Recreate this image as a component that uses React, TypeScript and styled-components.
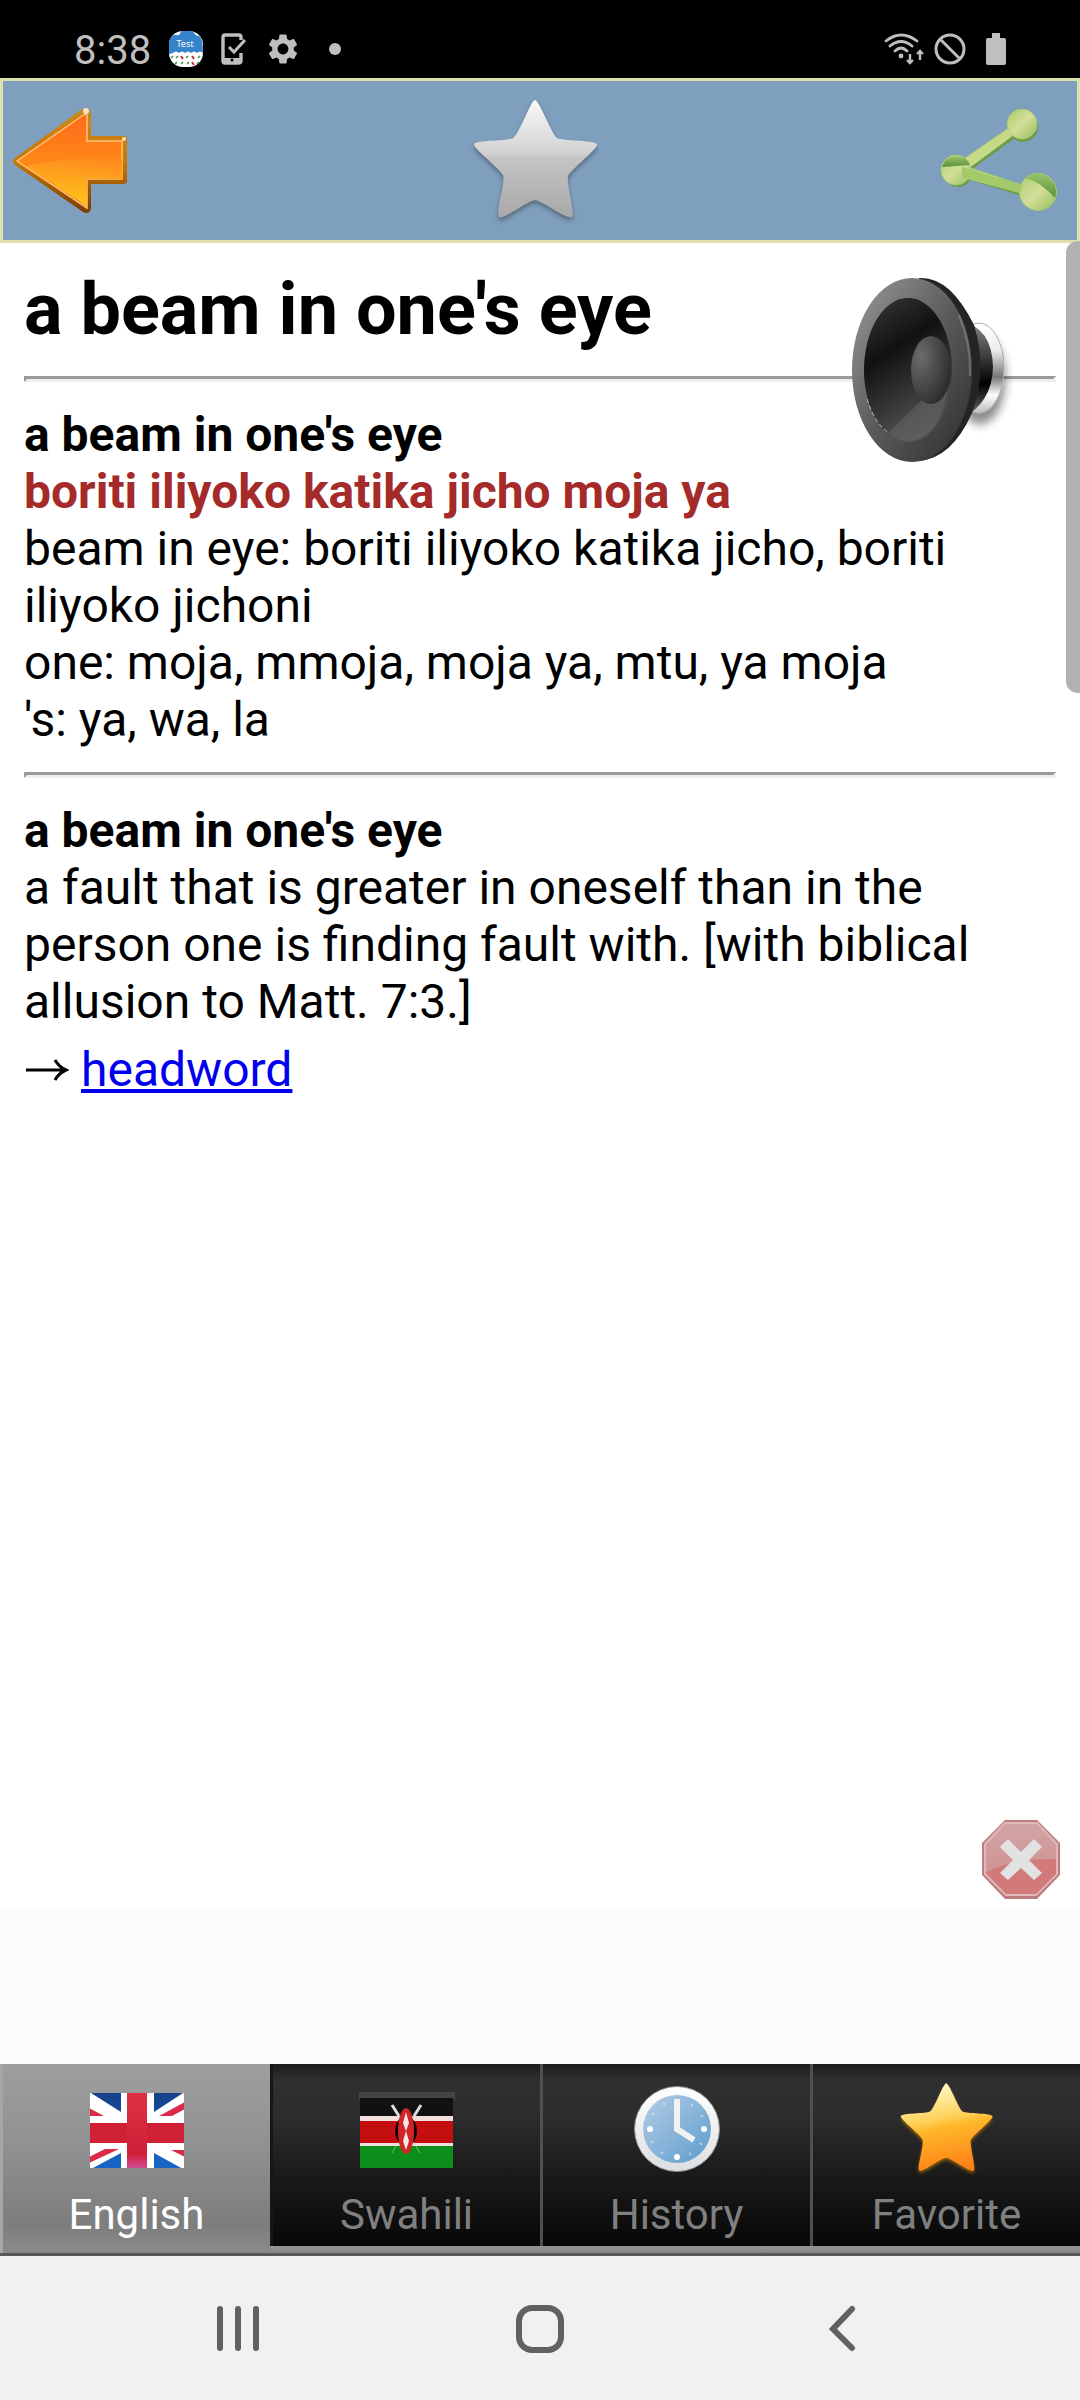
import React from "react";
import styled, { createGlobalStyle, css } from "styled-components";

const Global = createGlobalStyle`
  * { box-sizing: border-box; }
  body { margin: 0; background: #fff; font-family: Roboto, "Noto Sans", sans-serif; }
  button { border: 0; padding: 0; margin: 0; background: none; font: inherit; cursor: pointer; }
  svg { display: block; }
`;

const Screen = styled.div`
  display: flex;
  flex-direction: column;
  min-height: 100vh;
`;

const StatusBar = styled.header`
  display: flex;
  align-items: center;
  justify-content: space-between;
  height: 78px;
  padding: 20px 74px 0 74px;
  background: #000;
  color: #bfbfbf;
`;

const StatusGroup = styled.div<{ $gap: number }>`
  display: flex;
  align-items: center;
  gap: ${(p) => p.$gap}px;
`;

const Spaced = styled.span`
  padding-left: 10px;
`;

const Clock = styled.time`
  font-size: 40px;
  line-height: 48px;
  padding-top: 4px;
`;

const Toolbar = styled.nav`
  display: flex;
  align-items: center;
  justify-content: space-between;
  height: 165px;
  padding: 0 19px 0 9px;
  border: 3px solid #e0dfae;
  background: #7f9fbf;
`;

const Reader = styled.main`
  position: relative;
  flex: 1;
  padding: 24px;
`;

const Title = styled.h1`
  margin: 0;
  font-size: 72px;
  line-height: 85px;
  font-weight: 700;
`;

const Rule = styled.hr`
  margin: 24px 0;
  height: 6px;
  border: 3px solid;
  border-color: #9a9a9a #eee #eee #9a9a9a;
`;

const Entry = styled.section`
  font-size: 48px;
  line-height: 57px;
`;

const Line = styled.p<{ $tone?: "head" | "translation" }>`
  margin: 0;
  ${(p) => p.$tone && css`font-weight: 700;`}
  ${(p) => p.$tone === "translation" && css`color: brown;`}
`;

const Reference = styled.p`
  margin: 0;
  padding-top: 11px;
  display: flex;
  align-items: center;
  gap: 12px;
`;

const Link = styled.a`
  color: #00e;
  text-decoration: underline;
`;

const SpeakButton = styled.button`
  position: absolute;
  top: 30px;
  right: 66px;
`;

const ScrollThumb = styled.div`
  position: absolute;
  top: -2px;
  right: 0;
  width: 14px;
  height: 452px;
  border-radius: 12px 0 0 12px;
  background: #b1b1b1;
`;

const CloseButton = styled.button`
  position: absolute;
  right: 19px;
  bottom: 8px;
`;

const AdSpace = styled.aside`
  height: 156px;
  background: #fcfcfc;
`;

const Tabs = styled.nav`
  display: grid;
  grid-template-columns: repeat(4, 1fr);
  height: 192px;
  border-bottom: 3px solid #585858;
  background: linear-gradient(#969696 96%, #868686);
`;

const Tab = styled.button<{ $active?: boolean }>`
  display: flex;
  flex-direction: column;
  align-items: center;
  height: 182px;
  padding-top: 15px;
  font-size: 42px;
  line-height: 48px;
  color: #808080;
  border-left: 3px solid #505050;
  background: linear-gradient(#1c1c1c, #303030 9%, #2c2c2c 30%, #181818 65%, #080808);
  ${(p) =>
    p.$active &&
    css`
      height: 189px;
      color: #fff;
      border-left-color: #a6a6a6;
      background: linear-gradient(#9e9e9e, #929292 40%, #7d7d7d 85%, #8a8a8a);
      & + button { border-left-color: #161616; }
    `}
`;

const TabIcon = styled.span`
  display: flex;
  align-items: center;
  height: 104px;
  margin-bottom: 8px;
`;

const SystemNav = styled.footer`
  display: flex;
  align-items: center;
  justify-content: space-between;
  height: 144px;
  padding: 2px 205px 0;
  background: #f1f1f1;
`;

const STAR = "M62 3 C66 3 79 38 84 41 C90 44 120 43 124 47 C126 51 97 73 95 79 C93 86 102 116 99 120 C94 123 68 103 62 103 C56 103 30 123 26 120 C22 116 33 86 30 78 C27 72 0 51 1 47 C3 43 35 44 40 41 C46 38 58 3 62 3 Z";

function AppBadge() {
  return (
    <svg width="34" height="36" viewBox="0 0 34 36">
      <clipPath id="badge"><rect width="34" height="36" rx="14" /></clipPath>
      <g clipPath="url(#badge)">
        <rect width="34" height="36" fill="#fff" />
        <path d="M0 9 Q4 3 8 4 Q11 5 12 0 H24 Q26 5 30 5 Q34 7 34 22 Q31 19 28 22 Q25 19 22 22 Q19 19 16 22 Q13 19 10 22 Q7 19 4 22 L0 23Z" fill="#3583cb" />
        <path d="M2 27l2-2M7 27l2-2M17 27l2-2M29 27l2-2M6 33l2-2M12 33l2-2M18 33l2-2M28 33l2-2" stroke="#3c9a46" strokeWidth="1.6" />
        <path d="M12 25l2 3M23 25l2 3M23 31l2 3" stroke="#c43139" strokeWidth="2" />
        <text x="16" y="16" textAnchor="middle" fontSize="9" fontFamily="Noto Sans" fill="#fff">Test</text>
      </g>
    </svg>
  );
}

function PhoneCheck() {
  return (
    <svg width="26" height="32" viewBox="0 0 26 32" fill="none" stroke="#bfbfbf">
      <path d="M20 7V4Q20 2 18 2H4Q2 2 2 4V28Q2 30 4 30H17Q20 30 20 28V20" strokeWidth="3.4" />
      <path d="M2 25H20V29H2Z" fill="#bfbfbf" stroke="none" />
      <path d="M8 14L13 19L24 7" strokeWidth="3" />
      <circle cx="11" cy="27" r="1.5" fill="#000" stroke="none" />
    </svg>
  );
}

function Gear() {
  return (
    <svg width="36" height="36" viewBox="0 0 24 24" fill="#bfbfbf">
      <path d="M19.14 12.94c.04-.3.06-.61.06-.94 0-.32-.02-.64-.07-.94l2.03-1.58c.18-.14.23-.41.12-.61l-1.92-3.32c-.12-.22-.37-.29-.59-.22l-2.39.96c-.5-.38-1.03-.7-1.62-.94l-.36-2.54c-.04-.24-.24-.41-.48-.41h-3.84c-.24 0-.43.17-.47.41l-.36 2.54c-.59.24-1.13.57-1.62.94l-2.39-.96c-.22-.08-.47 0-.59.22L2.74 8.87c-.12.21-.08.47.12.61l2.03 1.58c-.05.3-.09.63-.09.94s.02.64.07.94l-2.03 1.58c-.18.14-.23.41-.12.61l1.92 3.32c.12.22.37.29.59.22l2.39-.96c.5.38 1.03.7 1.62.94l.36 2.54c.05.24.24.41.48.41h3.84c.24 0 .44-.17.47-.41l.36-2.54c.59-.24 1.13-.56 1.62-.94l2.39.96c.22.08.47 0 .59-.22l1.92-3.32c.12-.22.07-.47-.12-.61l-2.01-1.58zM12 15.6c-1.98 0-3.6-1.62-3.6-3.6s1.62-3.6 3.6-3.6 3.6 1.62 3.6 3.6-1.62 3.6-3.6 3.6z" />
    </svg>
  );
}

function Dot() {
  return (
    <svg width="12" height="12"><circle cx="6" cy="6" r="6" fill="#bfbfbf" /></svg>
  );
}

function Wifi() {
  return (
    <svg width="40" height="32" viewBox="0 0 40 32" fill="none" stroke="#bfbfbf" strokeWidth="2.8" strokeLinecap="round">
      <path d="M2 8Q17 -4 33 8M6 13Q17 4 28 13M11 18Q17 12 23 18" />
      <circle cx="17" cy="23" r="2.4" fill="#bfbfbf" stroke="none" />
      <path d="M26 21V30M23 27L26 30L29 27M36 27V18M33 21L36 18L39 21" strokeWidth="2.4" strokeLinecap="butt" />
    </svg>
  );
}

function Blocked() {
  return (
    <svg width="32" height="32" viewBox="0 0 32 32" fill="none" stroke="#bfbfbf" strokeWidth="3">
      <circle cx="16" cy="16" r="14" /><path d="M6 6L26 26" />
    </svg>
  );
}

function Battery() {
  return (
    <svg width="20" height="32" fill="#bfbfbf"><path d="M6 0H14V5H18Q20 5 20 7V30Q20 32 18 32H2Q0 32 0 30V7Q0 5 2 5H6Z" /></svg>
  );
}

function BackArrow() {
  return (
    <svg width="116" height="108" viewBox="0 0 116 108">
      <defs>
        <linearGradient id="ar" x1="0" y1="0" x2="0" y2="1">
          <stop offset="0" stopColor="#ff6a1c" /><stop offset=".5" stopColor="#ff8616" />
        </linearGradient>
        <linearGradient id="arLow" x1=".6" y1="0" x2=".4" y2="1">
          <stop offset="0" stopColor="#ff8c1e" /><stop offset="1" stopColor="#ffc91c" />
        </linearGradient>
        <linearGradient id="arEdge" x1="0" y1="0" x2="0" y2="1">
          <stop offset="0" stopColor="#c9891f" /><stop offset=".5" stopColor="#c97906" /><stop offset="1" stopColor="#7a3d02" />
        </linearGradient>
      </defs>
      <path d="M70 2Q78 -1 79 6V29H112Q115 29 115 33V74Q115 77 111 77H79V101Q78 108 71 105L3 58Q-1 54 3 51Z" fill="url(#arEdge)" />
      <path d="M73 7L75 8V34H110V72H75V101L5 54Z" fill="url(#ar)" stroke="#ffc277" strokeWidth="1.5" />
      <path d="M14 59Q50 49 110 53V72H75V99Z" fill="url(#arLow)" />
      <circle cx="74" cy="4" r="3" fill="#eee3d2" /><circle cx="112" cy="32" r="2" fill="#ffe0b0" />
    </svg>
  );
}

function GreyStar() {
  return (
    <svg width="130" height="128" viewBox="-4 0 130 128">
      <defs>
        <linearGradient id="gs" x1="0" y1="0" x2="0" y2="1">
          <stop offset="0" stopColor="#fafafa" /><stop offset=".45" stopColor="#d2d2d2" />
          <stop offset=".5" stopColor="#c4c4c4" /><stop offset="1" stopColor="#a8a8a8" />
        </linearGradient>
        <filter id="gsShadow" x="-10%" y="-10%" width="120%" height="125%">
          <feDropShadow dx="0" dy="3" stdDeviation="2" floodColor="#333" floodOpacity=".5" />
        </filter>
      </defs>
      <path d={STAR} fill="url(#gs)" filter="url(#gsShadow)" />
    </svg>
  );
}

function Share() {
  return (
    <svg width="118" height="104" viewBox="0 0 118 104">
      <defs>
        <linearGradient id="sh" x1="0" y1="0" x2="1" y2="1">
          <stop offset="0" stopColor="#a9cb6b" /><stop offset=".5" stopColor="#d3df9a" /><stop offset="1" stopColor="#94bd58" />
        </linearGradient>
        <linearGradient id="shDark" x1="0" y1="0" x2="0" y2="1">
          <stop offset="0" stopColor="#9cc76a" /><stop offset="1" stopColor="#5a8f3c" />
        </linearGradient>
      </defs>
      <g fill="#6d9b49">
        <circle cx="83" cy="18" r="15" /><circle cx="18" cy="64" r="14" />
        <path d="M29 52L74 20L78 27L31 61Z" /><path d="M30 66L83 82L82 87L30 71Z" />
      </g>
      <g fill="url(#sh)" stroke="#a4ca6c">
        <path d="M24 50L70 18L75 25L29 59Z" /><path d="M28 58L82 76L81 84L25 69Z" />
        <circle cx="82" cy="15" r="15" /><circle cx="16" cy="61" r="15" /><circle cx="98" cy="83" r="18.500" />
      </g>
      <path d="M24 50L70 19L73 25L28 57Z" fill="#c5d986" />
      <path d="M22 58L82 76L80 83L22 68Z" fill="#a3c96a" />
      <path d="M2 58Q5 47 17 47Q28 48 30 56Z" fill="url(#shDark)" />
      <path d="M85 69Q96 60 108 68Q119 76 115 89Q101 73 85 69Z" fill="url(#shDark)" />
    </svg>
  );
}

function Speaker() {
  return (
    <svg width="162" height="200" viewBox="0 0 162 200">
      <defs>
        <linearGradient id="rim" x1="0" y1="0" x2="1" y2="1">
          <stop offset="0" stopColor="#9a9a9a" /><stop offset=".5" stopColor="#5b5b5b" /><stop offset="1" stopColor="#2c2c2c" />
        </linearGradient>
        <linearGradient id="cone" x1=".2" y1="0" x2=".6" y2="1">
          <stop offset="0" stopColor="#333" /><stop offset=".35" stopColor="#111" /><stop offset="1" stopColor="#5a5a5a" />
        </linearGradient>
        <radialGradient id="cap" cx=".25" cy=".3" r=".8">
          <stop offset="0" stopColor="#6c6c6c" /><stop offset="1" stopColor="#2c2c2c" />
        </radialGradient>
        <linearGradient id="magnet" x1="0" y1="0" x2="0" y2="1">
          <stop offset="0" stopColor="#fff" /><stop offset=".3" stopColor="#eee" /><stop offset=".6" stopColor="#777" /><stop offset=".8" stopColor="#fff" /><stop offset="1" stopColor="#bbb" />
        </linearGradient>
        <linearGradient id="neck" x1="0" y1="0" x2="0" y2="1">
          <stop offset="0" stopColor="#8a8a8a" /><stop offset=".65" stopColor="#000" /><stop offset="1" stopColor="#777" />
        </linearGradient>
        <filter id="spShadow" x="-40%" y="-20%" width="200%" height="160%">
          <feDropShadow dx="1" dy="11" stdDeviation="5" floodOpacity=".45" />
        </filter>
      </defs>
      <ellipse cx="127" cy="95" rx="25" ry="45" fill="url(#magnet)" stroke="#aaa" filter="url(#spShadow)" />
      <path d="M108 48Q140 54 141 94Q140 130 110 145Z" fill="url(#neck)" />
      <path d="M67 5Q98 3 122 52Q136 97 120 140Q100 185 67 188Z" fill="#242424" />
      <ellipse cx="60" cy="97" rx="60" ry="92" fill="url(#rim)" />
      <ellipse cx="56" cy="97" rx="44" ry="72" fill="url(#cone)" />
      <path d="M96 111Q92 156 60 168Q43 168 36 160L70 127Z" fill="#626262" opacity=".6" />
      <ellipse cx="79" cy="97" rx="20" ry="34" fill="url(#cap)" />
      <path d="M15 126Q23 151 37 160" stroke="#bbb" fill="none" strokeDasharray="4 3" />
      <path d="M107 42Q119 70 118 103" stroke="#aaa" strokeWidth="2" fill="none" opacity=".4" />
    </svg>
  );
}

function CloseSign() {
  return (
    <svg width="80" height="81" viewBox="0 0 80 81">
      <defs>
        <linearGradient id="cl" x1="0" y1="0" x2="0" y2="1">
          <stop offset="0" stopColor="#d2a4a5" /><stop offset="1" stopColor="#cf8b8c" />
        </linearGradient>
      </defs>
      <path d="M24 1H56L79 24V56L56 80H24L1 56V24Z" fill="#bd7c7d" />
      <path d="M24 4H56L76 25V55L55 76H25L4 55V25Z" fill="url(#cl)" stroke="#dfb9ba" strokeWidth="2" />
      <path d="M5 54Q30 39 75 40V55L55 75H25Z" fill="#d27a7b" />
      <path d="M27 20L40 33L53 20L61 28L48 41L61 54L53 61L40 49L27 61L19 54L32 41L19 28Z" fill="#e2e2e2" />
    </svg>
  );
}

function BritishFlag() {
  return (
    <svg width="96" height="76" viewBox="0 0 96 76">
      <defs>
        <linearGradient id="blue" x1="0" y1="0" x2="0" y2="1"><stop offset="0" stopColor="#164089" /><stop offset="1" stopColor="#1767c6" /></linearGradient>
        <linearGradient id="crossRed" x1="0" y1="0" x2="0" y2="1"><stop offset="0" stopColor="#dd3142" /><stop offset=".8" stopColor="#d02038" /><stop offset="1" stopColor="#cd5098" /></linearGradient>
        <clipPath id="uk"><rect x="1" y="0" width="94" height="75" /></clipPath>
      </defs>
      <g clipPath="url(#uk)">
        <rect width="96" height="76" fill="#fff" />
        <path d="M2 0H32V19ZM65 0H94L65 19ZM2 76H32V60ZM65 60V76H94Z" fill="url(#blue)" />
        <path d="M0 15L15 23H0ZM96 9L70 23H83L96 16ZM0 70L30 56H16L0 64ZM96 57H82L96 64Z" fill="#dc2b48" />
        <path d="M0 40H96" stroke="#d02035" strokeWidth="20" />
        <path d="M38 0H58V76H38Z" fill="url(#crossRed)" />
      </g>
    </svg>
  );
}

function KenyanFlag() {
  return (
    <svg width="96" height="80" viewBox="0 0 96 80">
      <rect y="1" width="96" height="8" fill="#444" />
      <rect x="1" y="7" width="93" height="19" fill="#111" />
      <rect x="1" y="25" width="93" height="32" fill="#f1dede" />
      <rect x="1" y="30" width="93" height="22" fill="#c40e10" />
      <rect x="1" y="55" width="93" height="22" fill="#0c8e1b" />
      <path d="M33 15L61 62M61 15L33 62" stroke="#ddd" strokeWidth="1" opacity=".5" />
      <path d="M33 14L40 25M62 14L55 25" stroke="#ddd" strokeWidth="3" />
      <ellipse cx="47" cy="40" rx="11" ry="15" fill="#180505" />
      <ellipse cx="47" cy="40" rx="8" ry="23" fill="#d12424" />
      <path d="M47 21L50 32L47 40L50 50L47 59L44 50L47 40L44 32Z" fill="#f8e6e6" />
    </svg>
  );
}

function HistoryClock() {
  return (
    <svg width="88" height="94" viewBox="0 0 88 94">
      <defs>
        <linearGradient id="face" x1="0" y1="0" x2="1" y2="1"><stop offset="0" stopColor="#b5cce5" /><stop offset="1" stopColor="#5c9dcd" /></linearGradient>
        <linearGradient id="bezel" x1="0" y1="0" x2="0" y2="1"><stop offset="0" stopColor="#fff" /><stop offset="1" stopColor="#dcdfe1" /></linearGradient>
      </defs>
      <circle cx="44" cy="45" r="42.500" fill="url(#bezel)" stroke="#888" />
      <circle cx="44" cy="45" r="34" fill="url(#face)" />
      <circle cx="44" cy="45" r="28" fill="none" stroke="#d5e6f4" strokeWidth="3" strokeDasharray="2 12.660" opacity=".6" />
      <g fill="#fff"><circle cx="17" cy="45" r="3" /><circle cx="71" cy="45" r="3" /><circle cx="44" cy="73" r="3" /></g>
      <path d="M44 15V45L61 56" fill="none" stroke="#f2f2f2" strokeWidth="6" />
    </svg>
  );
}

function GoldStar() {
  return (
    <svg width="94" height="98" viewBox="0 2 126 130">
      <defs>
        <linearGradient id="go" x1=".4" y1="0" x2=".6" y2="1">
          <stop offset="0" stopColor="#fffbc8" /><stop offset=".4" stopColor="#ffd058" />
          <stop offset=".5" stopColor="#ffb72a" /><stop offset="1" stopColor="#ff7f17" />
        </linearGradient>
        <filter id="glow" x="-10%" y="-10%" width="120%" height="125%">
          <feDropShadow dx="0" dy="3" stdDeviation="2" floodColor="#b97800" floodOpacity=".7" />
        </filter>
      </defs>
      <path d={STAR} fill="url(#go)" filter="url(#glow)" />
    </svg>
  );
}

const tabs = [
  { label: "English", icon: <BritishFlag /> },
  { label: "Swahili", icon: <KenyanFlag /> },
  { label: "History", icon: <HistoryClock /> },
  { label: "Favorite", icon: <GoldStar /> },
];

export default function App() {
  const [active, setActive] = React.useState("English");
  return (
    <Screen>
      <Global />
      <StatusBar>
        <StatusGroup $gap={18}>
          <Clock>8:38</Clock>
          <AppBadge />
          <PhoneCheck />
          <Gear />
          <Spaced><Dot /></Spaced>
        </StatusGroup>
        <StatusGroup $gap={10}>
          <Wifi />
          <Blocked />
          <Spaced><Battery /></Spaced>
        </StatusGroup>
      </StatusBar>
      <Toolbar>
        <button aria-label="Back"><BackArrow /></button>
        <button aria-label="Add to favorites"><GreyStar /></button>
        <button aria-label="Share"><Share /></button>
      </Toolbar>
      <Reader>
        <Title>a beam in one's eye</Title>
        <Rule />
        <Entry>
          <Line $tone="head">a beam in one's eye</Line>
          <Line $tone="translation">boriti iliyoko katika jicho moja ya</Line>
          <Line>beam in eye: boriti iliyoko katika jicho, boriti iliyoko jichoni</Line>
          <Line>one: moja, mmoja, moja ya, mtu, ya moja</Line>
          <Line>'s: ya, wa, la</Line>
        </Entry>
        <Rule />
        <Entry>
          <Line $tone="head">a beam in one's eye</Line>
          <Line>a fault that is greater in oneself than in the person one is finding fault with. [with biblical allusion to Matt. 7:3.]</Line>
          <Reference>
            <svg width="45" height="30" viewBox="0 0 45 30" fill="none" stroke="#000" strokeWidth="3" aria-label="see">
              <path d="M2 15H42M31 5Q35 12 42 15Q35 18 31 25" />
            </svg>
            <Link href="#headword">headword</Link>
          </Reference>
        </Entry>
        <SpeakButton aria-label="Pronounce"><Speaker /></SpeakButton>
        <ScrollThumb />
        <CloseButton aria-label="Close"><CloseSign /></CloseButton>
      </Reader>
      <AdSpace />
      <Tabs>
        {tabs.map((t) => (
          <Tab key={t.label} $active={t.label === active} onClick={() => setActive(t.label)}>
            <TabIcon>{t.icon}</TabIcon>
            {t.label}
          </Tab>
        ))}
      </Tabs>
      <SystemNav>
        <button aria-label="Recent apps">
          <svg width="66" height="48" stroke="#616161" strokeWidth="6" strokeLinecap="round"><path d="M15 4V43M33 4V43M51 4V43" /></svg>
        </button>
        <button aria-label="Home">
          <svg width="50" height="50" fill="none" stroke="#616161" strokeWidth="6"><rect x="4" y="4" width="42" height="42" rx="13" /></svg>
        </button>
        <button aria-label="Back">
          <svg width="66" height="48" fill="none" stroke="#616161" strokeWidth="6" strokeLinecap="round"><path d="M43 4L24 24L43 43" /></svg>
        </button>
      </SystemNav>
    </Screen>
  );
}
